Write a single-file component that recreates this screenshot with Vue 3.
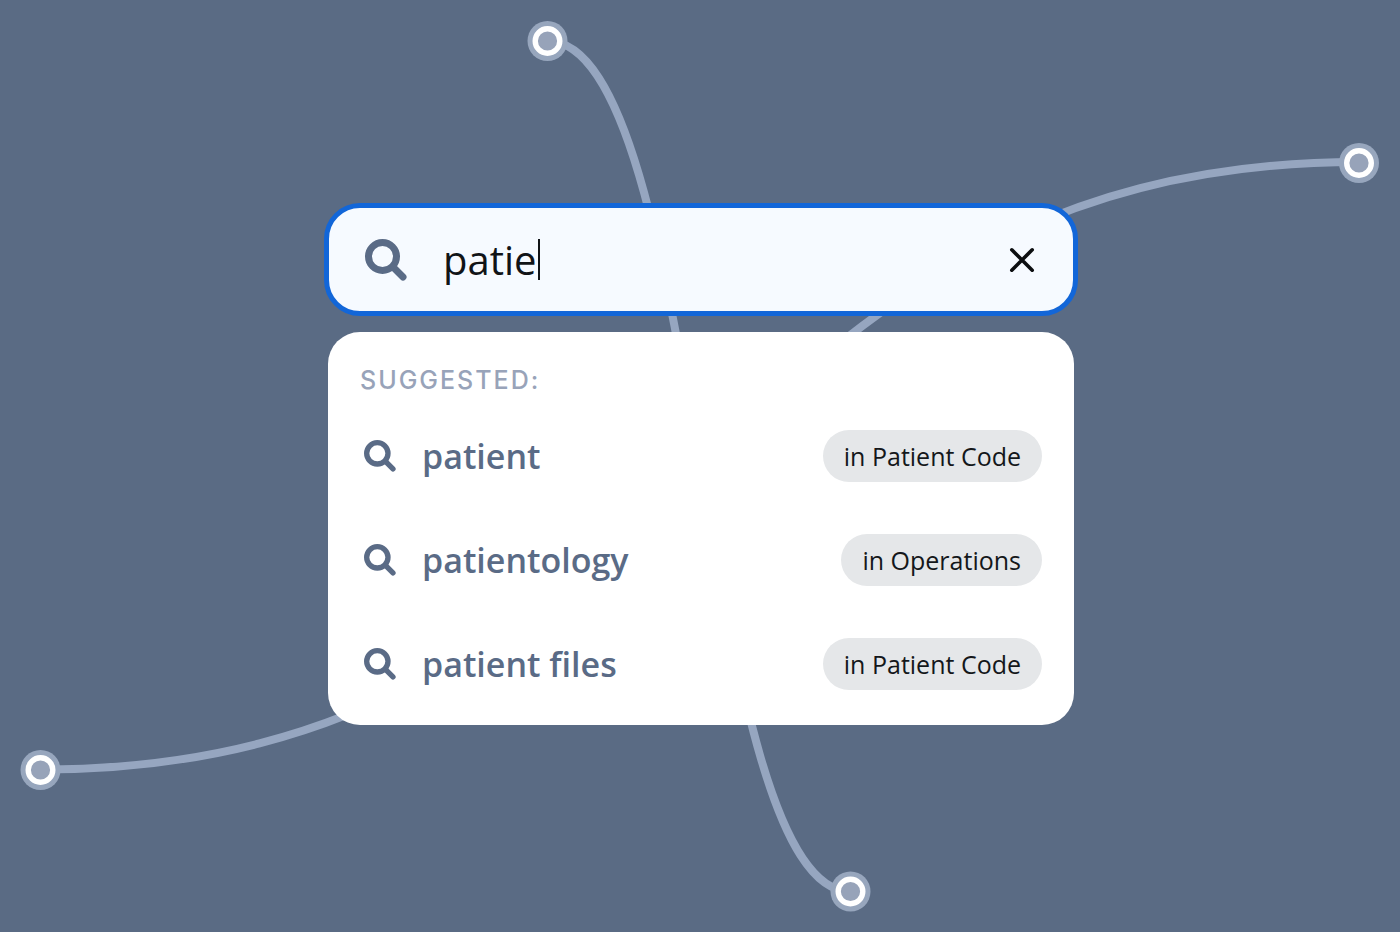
<template>
  <main class="scene">
    <svg class="network" viewBox="0 0 1400 932" preserveAspectRatio="xMidYMid slice" aria-hidden="true">
      <path v-for="line in lines" :key="line" class="line" :d="line" />
      <g v-for="node in nodes" :key="node.x">
        <circle class="halo" :cx="node.x" :cy="node.y" r="20" />
        <circle class="ring" :cx="node.x" :cy="node.y" r="12.3" />
      </g>
    </svg>

    <form class="search" role="search" @submit.prevent>
      <div class="field">
        <svg class="icon icon-large" viewBox="0 0 42 42" aria-hidden="true">
          <circle cx="17.5" cy="17.5" r="14" />
          <path d="M28.5 28.5 38 38" />
        </svg>
        <div class="entry">
          <input v-model="query" class="query" type="text" aria-label="Search" autocomplete="off" />
          <span class="caret"></span>
        </div>
        <button class="clear" type="button" aria-label="Clear" @click="query = ''">
          <svg viewBox="0 0 26 26" aria-hidden="true">
            <path d="M2.8 2.8 23.2 23.2M23.2 2.8 2.8 23.2" />
          </svg>
        </button>
      </div>

      <section class="panel">
        <h2 class="heading">SUGGESTED:</h2>
        <ul class="list">
          <li v-for="item in suggestions" :key="item.text">
            <button class="row" type="button" @click="query = item.text">
              <svg class="icon icon-small" viewBox="0 0 42 42" aria-hidden="true">
                <circle cx="17.5" cy="17.5" r="14" />
                <path d="M28.5 28.5 38 38" />
              </svg>
              <span class="term">{{ item.text }}</span>
              <span class="badge">{{ item.scope }}</span>
            </button>
          </li>
        </ul>
      </section>
    </form>
  </main>
</template>

<script setup>
import { ref } from 'vue'

const query = ref('patie')

const suggestions = [
  { text: 'patient', scope: 'in Patient Code' },
  { text: 'patientology', scope: 'in Operations' },
  { text: 'patient files', scope: 'in Patient Code' }
]

const nodes = [
  { x: 547.5, y: 41 },
  { x: 1359, y: 163 },
  { x: 40.5, y: 770 },
  { x: 850.5, y: 891.5 }
]

const lines = [
  'M547.5 41C702 41 699 891.5 850.5 891.5',
  'M40.5 769.5C700 769.5 700 162 1359 162'
]
</script>

<style>
body {
  margin: 0;
  background: #5a6b84;
}
</style>

<style scoped>
.scene {
  position: relative;
  box-sizing: border-box;
  min-height: 100vh;
  padding: 24px 24px 28px 26px;
  display: flex;
  align-items: center;
  justify-content: center;
  overflow: hidden;
  background: #5a6b84;
  font-family: 'Open Sans', sans-serif;
}

.network {
  position: absolute;
  inset: 0;
  width: 100%;
  height: 100%;
}

.line {
  fill: none;
  stroke: #96a6c0;
  stroke-width: 8;
}

.halo {
  fill: #97a6bd;
}

.ring {
  fill: #97a3b9;
  stroke: #fff;
  stroke-width: 5.4;
}

.search {
  position: relative;
  width: 100%;
  max-width: 754px;
  display: flex;
  flex-direction: column;
  gap: 16px;
}

.field {
  box-sizing: border-box;
  height: 113px;
  padding: 0 38px 0 36px;
  display: flex;
  align-items: center;
  gap: 36px;
  border: 5px solid #1266d8;
  border-radius: 36px;
  background: #f6faff;
}

.icon {
  flex: none;
  fill: none;
  stroke: #5a6b86;
  stroke-width: 7;
  stroke-linecap: round;
}

.icon-large {
  width: 42px;
  height: 42px;
}

.icon-small {
  width: 32px;
  height: 32px;
}

.entry {
  flex: 1;
  min-width: 0;
  display: flex;
  align-items: center;
  gap: 1px;
}

.query {
  field-sizing: content;
  min-width: 0;
  padding: 0;
  border: 0;
  outline: 0;
  background: transparent;
  color: #111417;
  caret-color: transparent;
  font: 400 40px/52px 'Open Sans', sans-serif;
}

.caret {
  width: 2px;
  height: 41px;
  background: #111417;
}

.clear {
  padding: 0;
  border: 0;
  background: none;
  cursor: pointer;
}

.clear svg {
  display: block;
  width: 26px;
  height: 26px;
  fill: none;
  stroke: #0c0e10;
  stroke-width: 3.6;
  stroke-linecap: round;
}

.panel {
  margin: 0 4px;
  padding: 32px 32px 35px;
  border-radius: 32px;
  background: #fff;
}

.heading {
  margin: 0 0 34px;
  color: #98a3b9;
  font: 500 25px/32px Inter, sans-serif;
  letter-spacing: 2px;
}

.list {
  margin: 0;
  padding: 0;
  display: grid;
  gap: 52px;
  list-style: none;
}

.row {
  width: 100%;
  height: 52px;
  padding: 0 0 0 4px;
  display: flex;
  align-items: center;
  gap: 26px;
  border: 0;
  background: none;
  font-family: inherit;
  text-align: left;
  cursor: pointer;
}

.term {
  flex: 1;
  color: #5a6b86;
  font-size: 34px;
  font-weight: 600;
  line-height: 44px;
}

.badge {
  padding: 0 21px;
  border-radius: 26px;
  background: #e5e7e9;
  color: #14171a;
  font-size: 25px;
  line-height: 52px;
}
</style>
